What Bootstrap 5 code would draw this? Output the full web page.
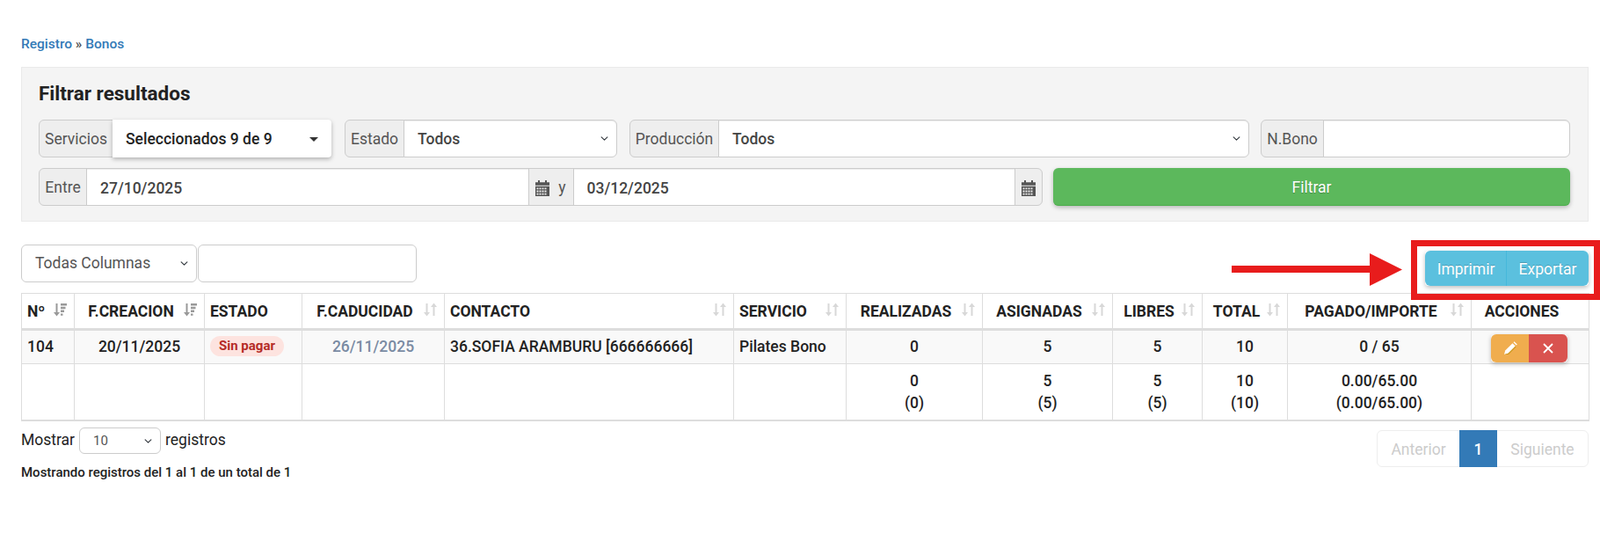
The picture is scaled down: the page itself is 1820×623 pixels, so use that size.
<!DOCTYPE html>
<html lang="es">
<head>
    <meta charset="UTF-8">
    <meta name="viewport" content="width=device-width, initial-scale=1.0">
    <title>Bonos</title>
    <link href="https://cdn.jsdelivr.net/npm/bootstrap@5.3.0/dist/css/bootstrap.min.css" rel="stylesheet">
    <style>
        body { font-family: Roboto, "Liberation Sans", sans-serif; font-size: 17.5px; color: #222; background: #fff; }
        a { color: #337ab7; text-decoration: none; }
        .page-wrap { padding: 0 13px 0 24px; }
        .migas { height: 76px; padding-top: 41px; font-size: 15.500px; line-height: 18px; font-weight: 500; color: #444; }
        .filtro-box { height: 176px; background: #f4f4f4; border: 1px solid #eaeaea; padding: 0 19px; }
        .filtro-titulo { font-size: 22.500px; font-weight: 700; line-height: 24px; margin: 17px 0 18px; color: #222; }
        .fila-filtro { display: flex; height: 43px; margin-bottom: 12px; }
        .fila-filtro .input-group { flex-wrap: nowrap; height: 43px; }
        .fila-filtro .input-group-text { background: #eee; border-color: #ccc; color: #555; font-size: 17.5px; padding: 2px 0 0; justify-content: center; }
        .fila-filtro .form-control, .fila-filtro .form-select { border-color: #ccc; color: #444; font-size: 17.5px; font-weight: 500; box-shadow: inset 0 1px 1px rgba(0,0,0,.075); height: 43px; padding-left: 15px; padding-top: 7px; padding-bottom: 5px; }
        .form-select { background-size: 11px 9px; background-position: right 8px center; }
        .w-serv { width: 333px; margin-right: 15px; }
        .w-est { width: 310px; margin-right: 14px; }
        .w-prod { width: 705px; margin-right: 13px; }
        .w-bono { width: 352px; }
        .w-fechas { width: 1142px; margin-right: 12px; }
        .w-filtrar { width: 588px; }
        .ad-serv { width: 85px; }
        .ad-est { width: 68px; }
        .ad-prod { width: 102px; }
        .ad-bono { width: 72px; }
        .ad-ent { width: 55px; }
        .ad-med { width: 52px; gap: 10px; }
        .ad-cal { width: 32px; }
        .btn-servicios { flex: 1; background: #fff; border: 0; border-radius: 0 4px 4px 0; box-shadow: 0 2px 5px rgba(0,0,0,.28); color: #222; font-size: 17.5px; font-weight: 500; padding: 2px 15px 0; display: flex; align-items: center; justify-content: space-between; z-index: 2; }
        .flecha-sel { width: 0; height: 0; border-left: 5px solid transparent; border-right: 5px solid transparent; border-top: 5px solid #333; }
        .icono-cal { width: 16px; height: 18px; fill: #555; flex: none; }
        .btn-filtrar { width: 100%; height: 43px; background: #5cb85c; border: 0; border-bottom: 1px solid #4cae4c; color: #fff; font-size: 17.5px; padding-top: 8px; text-shadow: 0 1px 1px rgba(0,0,0,.25); box-shadow: 0 2px 5px rgba(0,0,0,.25); }
        .barra-tabla { height: 81px; padding-top: 26px; }
        .sel-col { width: 200px; height: 43px; font-size: 17.5px; color: #555; border-color: #ccc; padding-left: 15px; }
        .buscar-col { width: 249px; height: 43px; margin-left: 1px; border-color: #ccc; }
        .grupo-export { margin-top: 7px; height: 40px; box-shadow: 0 2px 5px rgba(0,0,0,.25); border-radius: 4px; }
        .grupo-export .btn { background: #5bc0de; border: 0; color: #fff; font-size: 17.5px; padding: 2px 0 0; text-shadow: 0 -1px 0 rgba(0,0,0,.2); }
        .grupo-export .btn-imp { width: 93px; }
        .grupo-export .btn-exp { width: 94px; border-left: 1px solid #46b8da; }
        .marco-rojo { position: absolute; left: 1605px; top: 273px; width: 215px; height: 68px; border: 7px solid #e81c1c; pointer-events: none; z-index: 5; }
        .flecha-roja { position: absolute; left: 1401px; top: 288px; width: 194px; height: 37px; fill: #e81c1c; z-index: 5; }
        .tabla-bonos { table-layout: fixed; width: 1783px; margin: 0; border-color: #ddd; --bs-table-striped-bg: #f9f9f9; --bs-table-bg: #fff; --bs-table-color: #222; --bs-table-striped-color: #222; font-size: 17.5px; font-weight: 500; }
        .tabla-bonos th { height: 40px; font-weight: 700; padding: 8px 25px 6px 6px; line-height: 25px; white-space: nowrap; position: relative; border-bottom: 3px solid #ddd; vertical-align: middle; }
        .tabla-bonos td { padding: 6px 6px; line-height: 25px; vertical-align: middle; white-space: nowrap; }
        .tabla-bonos tbody tr:last-child td { padding: 7px 7px 6px; border-bottom-width: 2px; }
        .tabla-bonos td.celda-acc { padding: 2px 9px 0 6px; line-height: 1; }
        #tablaBonos td.fecha-gris { color: #7a8ba3; }
        .icono-orden { position: absolute; right: 8px; top: 10px; width: 15px; height: 16px; }
        .orden-on { fill: #999; }
        .orden-off { fill: #d8d8d8; }
        .pill-estado { display: inline-block; position: relative; top: -2px; height: 23px; line-height: 23px; padding: 0 10px; border-radius: 12px; background: #fde3df; color: #b52b27; font-size: 15px; font-weight: 700; }
        .grupo-acc { height: 32px; border-radius: 4px; box-shadow: 0 2px 5px rgba(0,0,0,.25); display: inline-flex; vertical-align: top; }
        .grupo-acc .btn { width: 44px; height: 32px; border: 0; padding: 0; display: flex; align-items: center; justify-content: center; }
        .grupo-acc .btn-edit { background: #f0ad4e; }
        .grupo-acc .btn-borrar { background: #d9534f; }
        .pie-tabla { display: flex; justify-content: space-between; padding-top: 7px; }
        .pie-izq { display: flex; align-items: center; gap: 5px; height: 30px; }
        .txt-pag { margin-top: -2px; }
        .sel-pag { width: 93px; height: 30px; font-size: 15px; color: #555; padding: 0 0 0 15px; border-color: #ccc; }
        .info-reg { font-size: 15px; font-weight: 500; line-height: 18px; margin-top: 12px; }
        .paginas { margin: 3px 0 0; height: 42px; }
        .paginas .page-item .page-link { height: 42px; line-height: 42px; padding: 0; text-align: center; font-size: 17.5px; font-weight: 400; background: #fff; border-color: #eee; color: #ccc; }
        .paginas .page-item.active .page-link { background: #337ab7; border-color: #337ab7; color: #fff; width: 43px; font-weight: 500; }
        .paginas .page-item .pag-ant { width: 95px; }
        .paginas .page-item .pag-sig { width: 105px; }
    </style>
</head>
<body>
    <div class="page-wrap position-relative">
        <div class="migas"><a href="#">Registro</a> » <a href="#">Bonos</a></div>

        <div class="filtro-box">
            <div class="filtro-titulo">Filtrar resultados</div>
            <div class="fila-filtro">
                <div class="input-group w-serv">
                    <span class="input-group-text ad-serv">Servicios</span>
                    <button type="button" class="btn-servicios"><span>Seleccionados 9 de 9</span><span class="flecha-sel"></span></button>
                </div>
                <div class="input-group w-est">
                    <span class="input-group-text ad-est">Estado</span>
                    <select class="form-select"><option>Todos</option></select>
                </div>
                <div class="input-group w-prod">
                    <span class="input-group-text ad-prod">Producción</span>
                    <select class="form-select"><option>Todos</option></select>
                </div>
                <div class="input-group w-bono">
                    <span class="input-group-text ad-bono">N.Bono</span>
                    <input type="text" class="form-control">
                </div>
            </div>
            <div class="fila-filtro">
                <div class="input-group w-fechas">
                    <span class="input-group-text ad-ent">Entre</span>
                    <input type="text" class="form-control" value="27/10/2025">
                    <span class="input-group-text ad-med">
                        <svg class="icono-cal" viewBox="0 0 16 16" preserveAspectRatio="none"><path d="M3 0h2v2h6V0h2v2h3v3H0V2h3zM0 6h16v10H0zm1.500 1.500v1.600h2V7.500zm3 0v1.600h2V7.500zm3 0v1.600h2V7.500zm3 0v1.600h2V7.500zm-9 2.800v1.600h2v-1.600zm3 0v1.600h2v-1.600zm3 0v1.600h2v-1.600zm3 0v1.600h2v-1.600zm-9 2.800v1.600h2v-1.600zm3 0v1.600h2v-1.600zm3 0v1.600h2v-1.600zm3 0v1.600h2v-1.600z" fill-rule="evenodd"/></svg>
                        y
                    </span>
                    <input type="text" class="form-control" value="03/12/2025">
                    <span class="input-group-text ad-cal">
                        <svg class="icono-cal" viewBox="0 0 16 16" preserveAspectRatio="none"><path d="M3 0h2v2h6V0h2v2h3v3H0V2h3zM0 6h16v10H0zm1.500 1.500v1.600h2V7.500zm3 0v1.600h2V7.500zm3 0v1.600h2V7.500zm3 0v1.600h2V7.500zm-9 2.800v1.600h2v-1.600zm3 0v1.600h2v-1.600zm3 0v1.600h2v-1.600zm3 0v1.600h2v-1.600zm-9 2.800v1.600h2v-1.600zm3 0v1.600h2v-1.600zm3 0v1.600h2v-1.600zm3 0v1.600h2v-1.600z" fill-rule="evenodd"/></svg>
                    </span>
                </div>
                <div class="w-filtrar"><button type="button" class="btn btn-filtrar">Filtrar</button></div>
            </div>
        </div>

        <div class="barra-tabla d-flex justify-content-between align-items-start">
            <div class="d-flex">
                <select class="form-select sel-col"><option>Todas Columnas</option></select>
                <input type="text" class="form-control buscar-col">
            </div>
            <div class="btn-group grupo-export">
                <button type="button" class="btn btn-imp">Imprimir</button>
                <button type="button" class="btn btn-exp">Exportar</button>
            </div>
        </div>

        <!-- anotacion roja sobre la captura -->
        <div class="marco-rojo"></div>
        <svg class="flecha-roja" viewBox="0 0 194 37"><path d="M0 14h157V0l37 18.500L157 37V22H0z"/></svg>

        <table class="table table-bordered table-striped tabla-bonos" id="tablaBonos">
            <colgroup>
                <col width="60"><col width="148"><col width="111"><col width="162"><col width="329"><col width="128"><col width="155"><col width="148"><col width="102"><col width="97"><col width="209"><col width="134">
            </colgroup>
            <thead>
                <tr id="cabecera"></tr>
            </thead>
            <tbody>
                <tr>
                    <td>104</td>
                    <td class="text-center">20/11/2025</td>
                    <td><span class="pill-estado">Sin pagar</span></td>
                    <td class="text-center fecha-gris">26/11/2025</td>
                    <td>36.SOFIA ARAMBURU [666666666]</td>
                    <td>Pilates Bono</td>
                    <td class="text-center">0</td>
                    <td class="text-center">5</td>
                    <td class="text-center">5</td>
                    <td class="text-center">10</td>
                    <td class="text-center">0 / 65</td>
                    <td class="text-center celda-acc">
                        <div class="grupo-acc btn-group">
                            <button type="button" class="btn btn-edit"><svg width="16" height="16" viewBox="0 0 16 16"><path d="M1 15l1.200-4.500L10.500 2.200l3.300 3.300-8.300 8.300z" fill="#fff"/><path d="M11.500 1.200l1-1 3.300 3.300-1 1z" fill="#fff"/><path d="M1 15l4.500-1.200 8.300-8.300.8.8-8.600 8.600z" fill="#c9971c"/></svg></button>
                            <button type="button" class="btn btn-borrar"><svg width="14" height="14" viewBox="0 0 14 14"><path d="M2 2l10 10M12 2L2 12" stroke="#fff" stroke-width="1.800"/></svg></button>
                        </div>
                    </td>
                </tr>
                <tr>
                    <td></td><td></td><td></td><td></td><td></td><td></td>
                    <td class="text-center">0<br>(0)</td>
                    <td class="text-center">5<br>(5)</td>
                    <td class="text-center">5<br>(5)</td>
                    <td class="text-center">10<br>(10)</td>
                    <td class="text-center">0.00/65.00<br>(0.00/65.00)</td>
                    <td></td>
                </tr>
            </tbody>
        </table>

        <div class="pie-tabla">
            <div>
                <div class="pie-izq"><span class="txt-pag">Mostrar</span> <select class="form-select sel-pag"><option>10</option></select> <span class="txt-pag">registros</span></div>
                <div class="info-reg">Mostrando registros del 1 al 1 de un total de 1</div>
            </div>
            <ul class="pagination paginas">
                <li class="page-item disabled"><a class="page-link pag-ant" href="#">Anterior</a></li>
                <li class="page-item active"><a class="page-link" href="#">1</a></li>
                <li class="page-item disabled"><a class="page-link pag-sig" href="#">Siguiente</a></li>
            </ul>
        </div>
    </div>

    <script src="https://cdn.jsdelivr.net/npm/bootstrap@5.3.0/dist/js/bootstrap.bundle.min.js"></script>
    <script>
        // cabecera de la tabla: texto, alineado y tipo de icono de orden
        const columnas = [
            ['Nº', 'start', 'on'], ['F.CREACION', 'center', 'on'], ['ESTADO', 'start', ''],
            ['F.CADUCIDAD', 'center', 'off'], ['CONTACTO', 'start', 'off'], ['SERVICIO', 'start', 'off'],
            ['REALIZADAS', 'center', 'off'], ['ASIGNADAS', 'center', 'off'], ['LIBRES', 'center', 'off'],
            ['TOTAL', 'center', 'off'], ['PAGADO/IMPORTE', 'center', 'off'], ['ACCIONES', 'center', '']
        ];
        const iconos = {
            on: '<svg class="icono-orden orden-on" viewBox="0 0 15 16"><path d="M2.500 1h2v10H7l-3.500 4.500L0 11h2.500z"/><path d="M8 1h7v2.400H8zM8 4.800h5.500v2.400H8zM8 8.600h4v2.400H8zM8 12.400h2.500v2.400H8z"/></svg>',
            off: '<svg class="icono-orden orden-off" viewBox="0 0 15 16"><path d="M2.500 1h2v10H7l-3.500 4.500L0 11h2.500z"/><path d="M10.500 15h2V5H15L11.500.5 8 5h2.500z"/></svg>'
        };
        document.getElementById('cabecera').innerHTML = columnas.map(c =>
            `<th class="text-${c[1]}">${c[0]}${iconos[c[2]] || ''}</th>`).join('');
    </script>
</body>
</html>
